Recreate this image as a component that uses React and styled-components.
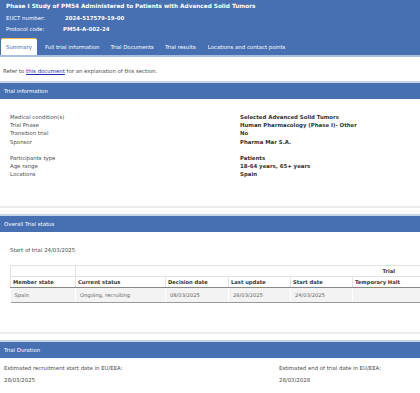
import React from 'react';
import styled, { createGlobalStyle } from 'styled-components';

const Global = createGlobalStyle`
  html, body {
    margin: 0;
    padding: 0;
    background: #fff;
    overflow: hidden;
  }
  body {
    font-family: 'DejaVu Sans', Verdana, sans-serif;
    font-size: 5.4px;
    color: #4a4a4a;
  }
`;

const Page = styled.div`
  width: 420px;
  height: 393px;
  overflow: hidden;
`;

const Header = styled.div`
  background: #4670b2;
  color: #fff;
  padding-top: 2px;
  border-bottom: 2px solid #a9bfe0;
`;

const Title = styled.div`
  font-weight: bold;
  font-size: 5.75px;
  line-height: 8px;
  padding-left: 6px;
  margin-bottom: 3px;
`;

const MetaRow = styled.div`
  display: flex;
  padding-left: 6px;
  line-height: 11px;
  font-size: 5.4px;
`;

const MetaLabel = styled.span`
  width: ${p => p.w}px;
`;

const MetaValue = styled.span`
  font-weight: bold;
`;

const Tabs = styled.div`
  display: flex;
  align-items: flex-end;
  margin-top: 3px;
  padding-left: 1px;
  height: 17px;
`;

const Tab = styled.div`
  height: 16px;
  line-height: 16px;
  padding: 0 ${p => p.pad}px 0 ${p => p.padl}px;
  color: ${p => (p.active ? '#4670b2' : '#fff')};
  background: ${p => (p.active ? '#fff' : 'transparent')};
  border-top: 1px solid ${p => (p.active ? '#f0c24a' : 'transparent')};
  border-radius: 2px 2px 0 0;
  white-space: nowrap;
`;

const Note = styled.div`
  padding: 10px 0 0 3px;
  line-height: 9px;
  height: 14px;
`;

const Link = styled.a`
  color: #1f2fb8;
  text-decoration: underline;
`;

const Bar = styled.div`
  background: #4670b2;
  color: #fff;
  height: 16px;
  line-height: 16px;
  padding-left: 4px;
  border-top: 2px solid #c9d4e6;
`;

const Separator = styled.div`
  height: 2px;
  background: #ececec;
  margin-top: ${p => p.top}px;
  margin-bottom: 6px;
`;

const InfoGrid = styled.div`
  display: grid;
  grid-template-columns: 230px 1fr;
  padding: 14px 0 0 10px;
  line-height: 8.2px;
`;

const InfoLabel = styled.div``;

const InfoValue = styled.div`
  font-weight: bold;
  color: #333;
`;

const Gap = styled.div`
  grid-column: 1 / span 2;
  height: 8px;
`;

const StartText = styled.div`
  padding: 14px 0 0 10px;
  line-height: 8px;
`;

const Table = styled.table`
  margin: 11px 0 0 10px;
  width: 520px;
  border-collapse: collapse;
  table-layout: fixed;
`;

const Th = styled.th`
  text-align: ${p => p.align || 'left'};
  font-weight: bold;
  color: #333;
  padding: 0 ${p => p.padr || 2}px 0 2px;
  height: ${p => p.h || 9}px;
  border: 1px solid #e3e3e3;
  border-bottom: ${p => (p.strong ? '1px solid #888' : '1px solid #e3e3e3')};
  border-top: ${p => (p.topLine ? '1px solid #888' : '1px solid #e3e3e3')};
  font-size: 5.2px;
`;

const Td = styled.td`
  background: #f3f3f3;
  padding: 0 4px;
  height: 14px;
  border-right: 1px solid #fff;
  border-bottom: 1px solid #999;
  color: #666;
  font-size: 5.2px;
`;

const DurationRow = styled.div`
  display: grid;
  grid-template-columns: 275px 1fr;
  padding: 4px 0 0 4px;
  line-height: 12px;
`;

const Field = styled.div``;

const App = () => {
  const cols = [65, 90, 63, 62, 62, 178];
  return (
    <Page>
      <Global />
      <Header>
        <Title>Phase I Study of PM54 Administered to Patients with Advanced Solid Tumors</Title>
        <MetaRow><MetaLabel w={59}>EUCT number:</MetaLabel><MetaValue>2024-517579-19-00</MetaValue></MetaRow>
        <MetaRow><MetaLabel w={57}>Protocol code:</MetaLabel><MetaValue>PM54-A-002-24</MetaValue></MetaRow>
        <Tabs>
          <Tab active padl={5} pad={5}>Summary</Tab>
          <Tab padl={8} pad={5}>Full trial information</Tab>
          <Tab padl={6} pad={6}>Trial Documents</Tab>
          <Tab padl={5} pad={6}>Trial results</Tab>
          <Tab padl={6} pad={6}>Locations and contact points</Tab>
        </Tabs>
      </Header>
      <Note>Refer to <Link href="#">this document</Link> for an explanation of this section.</Note>
      <Bar>Trial information</Bar>
      <InfoGrid>
        <InfoLabel>Medical condition(s)</InfoLabel><InfoValue>Selected Advanced Solid Tumors</InfoValue>
        <InfoLabel>Trial Phase</InfoLabel><InfoValue>Human Pharmacology (Phase I)- Other</InfoValue>
        <InfoLabel>Transition trial</InfoLabel><InfoValue>No</InfoValue>
        <InfoLabel>Sponsor</InfoLabel><InfoValue>Pharma Mar S.A.</InfoValue>
        <Gap />
        <InfoLabel>Participants type</InfoLabel><InfoValue>Patients</InfoValue>
        <InfoLabel>Age range</InfoLabel><InfoValue>18-64 years, 65+ years</InfoValue>
        <InfoLabel>Locations</InfoLabel><InfoValue>Spain</InfoValue>
      </InfoGrid>
      <Separator top={28} />
      <Bar>Overall Trial status</Bar>
      <StartText>Start of trial 24/03/2025</StartText>
      <Table>
        <colgroup>
          {cols.map((w, i) => <col key={i} style={{ width: w }} />)}
        </colgroup>
        <thead>
          <tr>
            <Th h={10} />
            <Th h={10} colSpan={5} align="right" padr={135}>Trial</Th>
          </tr>
          <tr>
            <Th strong topLine h={10}>Member state</Th>
            <Th strong topLine h={10}>Current status</Th>
            <Th strong topLine h={10}>Decision date</Th>
            <Th strong topLine h={10}>Last update</Th>
            <Th strong topLine h={10}>Start date</Th>
            <Th strong topLine h={10}>Temporary Halt</Th>
          </tr>
        </thead>
        <tbody>
          <tr>
            <Td>Spain</Td>
            <Td>Ongoing, recruiting</Td>
            <Td>08/03/2025</Td>
            <Td>26/03/2025</Td>
            <Td>24/03/2025</Td>
            <Td />
          </tr>
        </tbody>
      </Table>
      <Separator top={29} />
      <Bar>Trial Duration</Bar>
      <DurationRow>
        <Field>Estimated recruitment start date in EU/EEA:<br />28/03/2025</Field>
        <Field>Estimated end of trial date in EU/EEA:<br />28/03/2028</Field>
      </DurationRow>
    </Page>
  );
};

export default App;
